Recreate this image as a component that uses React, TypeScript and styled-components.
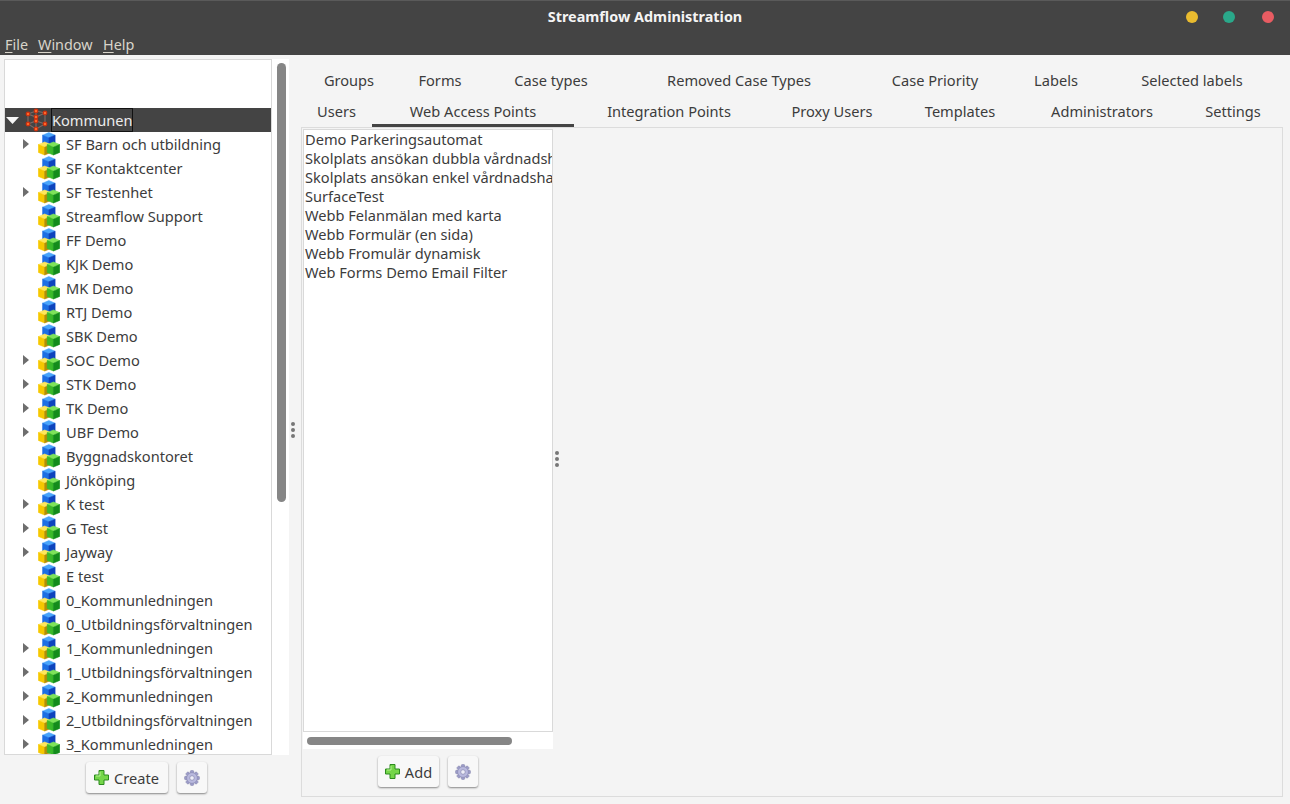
import styled, { createGlobalStyle } from "styled-components";

const Global = createGlobalStyle`
  html, body {
    margin: 0;
    padding: 0;
    background: #f5f5f5;
  }
  body {
    font-family: "Noto Sans", "Open Sans", sans-serif;
    font-size: 14.6px;
    color: #3c3c3c;
  }
`;

const Frame = styled.div`
  width: 1290px;
  height: 804px;
  display: flex;
  flex-direction: column;
  overflow: hidden;
  background: #f4f4f4;
`;

const Header = styled.header`
  height: 55px;
  flex: none;
  background: #444444;
  border-top: 1px solid #5a5a5a;
  box-sizing: border-box;
`;

const TitleBar = styled.div`
  height: 35px;
  position: relative;
  display: flex;
  justify-content: center;
  padding-top: 6px;
  box-sizing: border-box;
`;

const Title = styled.div`
  font-weight: 700;
  font-size: 14.4px;
  line-height: 20px;
  color: #f4f4f4;
`;

const Lights = styled.div`
  position: absolute;
  right: 16px;
  top: 10px;
  display: flex;
  gap: 25px;
`;

const Light = styled.span<{ $color: string; $shift?: number }>`
  width: 12px;
  height: 12px;
  border-radius: 50%;
  background: ${(p) => p.$color};
  margin-left: ${(p) => p.$shift ?? 0}px;
`;

const MenuBar = styled.nav`
  display: flex;
  padding-left: 5px;
  line-height: 18px;
  font-size: 14.4px;
  color: #d8d4ca;
`;

const MenuItem = styled.span<{ $w: number }>`
  width: ${(p) => p.$w}px;
  & u {
    text-underline-offset: 2px;
  }
`;

const Main = styled.main`
  flex: 1;
  display: flex;
  min-height: 0;
`;

const LeftPane = styled.section`
  width: 289px;
  flex: none;
  display: flex;
  flex-direction: column;
  padding: 4px 0 0 4px;
  box-sizing: border-box;
`;

const TreeWrap = styled.div`
  height: 696px;
  display: flex;
  flex: none;
`;

const TreeBox = styled.div`
  width: 268px;
  box-sizing: border-box;
  border: 1px solid #d9d9d9;
  background: #fff;
  padding-top: 48px;
  overflow: hidden;
`;

const VTrack = styled.div`
  flex: 1;
  background: #fff;
  padding: 4px 0 0 5px;
`;

const VThumb = styled.div`
  width: 9px;
  height: 439px;
  border-radius: 5px;
  background: #868686;
`;

const TreeRow = styled.div<{ $selected?: boolean }>`
  height: 24px;
  display: flex;
  align-items: center;
  flex: none;
  color: ${(p) => (p.$selected ? "#ececec" : "#3c3c3c")};
  background: ${(p) => (p.$selected ? "#444444" : "transparent")};
  white-space: nowrap;
`;

const ArrowSlot = styled.span<{ $w: number; $pad: number }>`
  width: ${(p) => p.$w}px;
  flex: none;
  display: flex;
  padding-left: ${(p) => p.$pad}px;
  box-sizing: border-box;
`;

const RootLabel = styled.span`
  border: 1px solid #111;
  height: 24px;
  box-sizing: border-box;
  line-height: 22px;
  margin-left: 3px;
  width: 82px;
  flex: none;
`;

const OrgLabel = styled.span`
  margin-left: 6px;
`;

const ButtonRow = styled.div`
  display: flex;
  justify-content: center;
  gap: 9px;
`;

const LeftButtons = styled(ButtonRow)`
  width: 268px;
  margin-top: 7px;
  padding-left: 16px;
  box-sizing: border-box;
`;

const Button = styled.button<{ $w: number }>`
  width: ${(p) => p.$w}px;
  height: 31px;
  box-sizing: border-box;
  border: 0;
  border-radius: 3px;
  background: #f8f8f8;
  box-shadow: 0 1px 2px rgba(0, 0, 0, 0.45);
  display: flex;
  align-items: center;
  justify-content: center;
  gap: 5px;
  padding: 0;
  font: inherit;
  color: #3c3c3c;
`;

const Splitter = styled.div`
  width: 12px;
  flex: none;
  display: flex;
  flex-direction: column;
  align-items: center;
  justify-content: center;
  gap: 2px;
  padding-right: 4px;
  box-sizing: border-box;
`;

const Dot = styled.span`
  width: 4px;
  height: 4px;
  border-radius: 50%;
  background: #777;
`;

const RightPane = styled.section`
  width: 982px;
  flex: none;
  display: flex;
  flex-direction: column;
  padding-top: 11px;
`;

const TabRow = styled.div`
  display: flex;
  height: 30px;
  line-height: 28px;
  flex: none;
`;

const TabRowLow = styled(TabRow)`
  height: 31px;
  line-height: 30px;
`;

const Tab = styled.div<{ $w: number; $active?: boolean }>`
  width: ${(p) => p.$w}px;
  flex: none;
  box-sizing: border-box;
  text-align: center;
  height: 100%;
  border-bottom: 3px solid ${(p) => (p.$active ? "#444444" : "transparent")};
`;

const TabBody = styled.div`
  height: 670px;
  box-sizing: border-box;
  border: 1px solid #dcdcdc;
  display: flex;
  flex: none;
  padding: 1px 0 0 1px;
`;

const ListColumn = styled.div`
  width: 250px;
  flex: none;
  display: flex;
  flex-direction: column;
`;

const ListBox = styled.div`
  height: 603px;
  box-sizing: border-box;
  background: #fff;
  border: 1px solid #d9d9d9;
  padding: 0 0 0 1px;
  overflow: hidden;
  flex: none;
`;

const ListItem = styled.div`
  height: 19px;
  line-height: 19px;
  white-space: nowrap;
`;

const HTrack = styled.div`
  height: 17px;
  flex: none;
  background: #fff;
  padding: 5px 0 0 4px;
  box-sizing: border-box;
`;

const HThumb = styled.div`
  width: 205px;
  height: 8px;
  border-radius: 4px;
  background: #868686;
`;

const RightButtons = styled(ButtonRow)`
  margin-top: 7px;
`;

const InnerSplitter = styled(Splitter)`
  height: 660px;
  padding: 0;
  width: 8px;
`;

function ThreeCubes() {
  const cube = (x: number, y: number, top: string, left: string, right: string) => (
    <g transform={`translate(${x} ${y})`} strokeLinejoin="round">
      <path d="M6.25 0 12.5 2.6 6.25 5.2 0 2.6Z" fill={top} stroke={top} strokeWidth="0.6" />
      <path d="M0 2.6 6.25 5.2V13L0 10.4Z" fill={left} stroke={left} strokeWidth="0.6" />
      <path d="M12.5 2.6 6.25 5.2V13L12.5 10.4Z" fill={right} stroke={right} strokeWidth="0.6" />
    </g>
  );
  return (
    <svg width="22" height="24" viewBox="0 0 22 24" style={{ flex: "none" }}>
      {cube(4.6, 0.6, "#49a5fb", "#1c6fe4", "#0d43bd")}
      {cube(0.4, 10, "#ffe65c", "#f6c800", "#b58d06")}
      {cube(9.2, 10, "#7ee35a", "#3aba2a", "#138c1b")}
    </svg>
  );
}

function RootIcon() {
  const nodes = [
    [3, 5],
    [11, 2],
    [20, 4],
    [11, 8],
    [3, 15],
    [11, 12],
    [20, 15],
    [11, 20],
  ];
  return (
    <svg width="24" height="24" viewBox="-1 -1 24 24" style={{ flex: "none" }}>
      <path d="M3 5 11 2 20 4 11 8ZM3 5V15L11 20V8M20 4V15L11 20M3 15 11 12 20 15M11 2V12" fill="none" stroke="#7c6a66" strokeWidth="1.2" />
      {nodes.map(([x, y]) => (
        <g key={`${x}-${y}`}>
          <circle cx={x} cy={y} r="2.4" fill="#c9300f" />
          <circle cx={x} cy={y} r="1.2" fill="#ff6a2a" />
        </g>
      ))}
    </svg>
  );
}

function Gear() {
  const teeth = [0, 45, 90, 135, 180, 225, 270, 315];
  return (
    <svg width="16" height="16" viewBox="0 0 16 16">
      {teeth.map((a) => (
        <rect key={a} x="6.3" y="0.6" width="3.4" height="3.6" rx="0.8" fill="#9d9dc9" stroke="#7b7ba6" strokeWidth="0.5" transform={`rotate(${a} 8 8)`} />
      ))}
      <circle cx="8" cy="8" r="5.4" fill="#b9b9de" stroke="#8484ac" strokeWidth="0.6" />
      <circle cx="8" cy="8" r="2.3" fill="#eeeef8" stroke="#8a8ab0" strokeWidth="0.7" />
    </svg>
  );
}

function Plus() {
  return (
    <svg width="15" height="15" viewBox="0 0 15 15">
      <path d="M5 .5h5v4.5h4.5v5H10v4.5H5V10H.5V5H5Z" fill="#75d64a" stroke="#2c8a1f" strokeWidth="1" strokeLinejoin="round" />
      <path d="M6 2v4H2" fill="none" stroke="#b5f090" strokeWidth="1" />
    </svg>
  );
}

function Arrow({ open }: { open?: boolean }) {
  if (open) {
    return (
      <svg width="13" height="7" viewBox="0 0 13 7">
        <path d="M0 0H13L6.5 7Z" fill="#f6f6f6" />
      </svg>
    );
  }
  return (
    <svg width="6" height="10" viewBox="0 0 6 10">
      <path d="M0 0 6 5 0 10Z" fill="#6e6e6e" />
    </svg>
  );
}

const orgs: [string, boolean][] = [
  ["SF Barn och utbildning", true],
  ["SF Kontaktcenter", false],
  ["SF Testenhet", true],
  ["Streamflow Support", false],
  ["FF Demo", false],
  ["KJK Demo", false],
  ["MK Demo", false],
  ["RTJ Demo", false],
  ["SBK Demo", false],
  ["SOC Demo", true],
  ["STK Demo", true],
  ["TK Demo", true],
  ["UBF Demo", true],
  ["Byggnadskontoret", false],
  ["Jönköping", false],
  ["K test", true],
  ["G Test", true],
  ["Jayway", true],
  ["E test", false],
  ["0_Kommunledningen", false],
  ["0_Utbildningsförvaltningen", false],
  ["1_Kommunledningen", true],
  ["1_Utbildningsförvaltningen", true],
  ["2_Kommunledningen", true],
  ["2_Utbildningsförvaltningen", true],
  ["3_Kommunledningen", true],
];

const topTabs: [string, number][] = [
  ["Groups", 96],
  ["Forms", 86],
  ["Case types", 136],
  ["Removed Case Types", 240],
  ["Case Priority", 152],
  ["Labels", 90],
  ["Selected labels", 182],
];

const lowTabs: [string, number][] = [
  ["Users", 71],
  ["Web Access Points", 202],
  ["Integration Points", 190],
  ["Proxy Users", 136],
  ["Templates", 120],
  ["Administrators", 164],
  ["Settings", 98],
];

const accessPoints = [
  "Demo Parkeringsautomat",
  "Skolplats ansökan dubbla vårdnadshavare",
  "Skolplats ansökan enkel vårdnadshavare",
  "SurfaceTest",
  "Webb Felanmälan med karta",
  "Webb Formulär (en sida)",
  "Webb Fromulär dynamisk",
  "Web Forms Demo Email Filter",
];

export default function App() {
  return (
    <Frame>
      <Global />
      <Header>
        <TitleBar>
          <Title>Streamflow Administration</Title>
          <Lights>
            <Light $color="#e9bb2f" />
            <Light $color="#2aa88a" />
            <Light $color="#e85c62" $shift={2} />
          </Lights>
        </TitleBar>
        <MenuBar>
          <MenuItem $w={33}><u>F</u>ile</MenuItem>
          <MenuItem $w={65}><u>W</u>indow</MenuItem>
          <MenuItem $w={40}><u>H</u>elp</MenuItem>
        </MenuBar>
      </Header>
      <Main>
        <LeftPane>
          <TreeWrap>
            <TreeBox>
              <TreeRow $selected>
                <ArrowSlot $w={19} $pad={1}>
                  <Arrow open />
                </ArrowSlot>
                <RootIcon />
                <RootLabel>Kommunen</RootLabel>
              </TreeRow>
              {orgs.map(([name, expandable]) => (
                <TreeRow key={name}>
                  <ArrowSlot $w={33} $pad={18}>
                    {expandable && <Arrow />}
                  </ArrowSlot>
                  <ThreeCubes />
                  <OrgLabel>{name}</OrgLabel>
                </TreeRow>
              ))}
            </TreeBox>
            <VTrack>
              <VThumb />
            </VTrack>
          </TreeWrap>
          <LeftButtons>
            <Button $w={82}>
              <Plus />
              Create
            </Button>
            <Button $w={30}>
              <Gear />
            </Button>
          </LeftButtons>
        </LeftPane>
        <Splitter>
          <Dot />
          <Dot />
          <Dot />
        </Splitter>
        <RightPane>
          <TabRow>
            {topTabs.map(([name, w]) => (
              <Tab key={name} $w={w}>{name}</Tab>
            ))}
          </TabRow>
          <TabRowLow>
            {lowTabs.map(([name, w]) => (
              <Tab key={name} $w={w} $active={name === "Web Access Points"}>{name}</Tab>
            ))}
          </TabRowLow>
          <TabBody>
            <ListColumn>
              <ListBox>
                {accessPoints.map((name) => (
                  <ListItem key={name}>{name}</ListItem>
                ))}
              </ListBox>
              <HTrack>
                <HThumb />
              </HTrack>
              <RightButtons>
                <Button $w={61}>
                  <Plus />
                  Add
                </Button>
                <Button $w={30}>
                  <Gear />
                </Button>
              </RightButtons>
            </ListColumn>
            <InnerSplitter>
              <Dot />
              <Dot />
              <Dot />
            </InnerSplitter>
          </TabBody>
        </RightPane>
      </Main>
    </Frame>
  );
}
